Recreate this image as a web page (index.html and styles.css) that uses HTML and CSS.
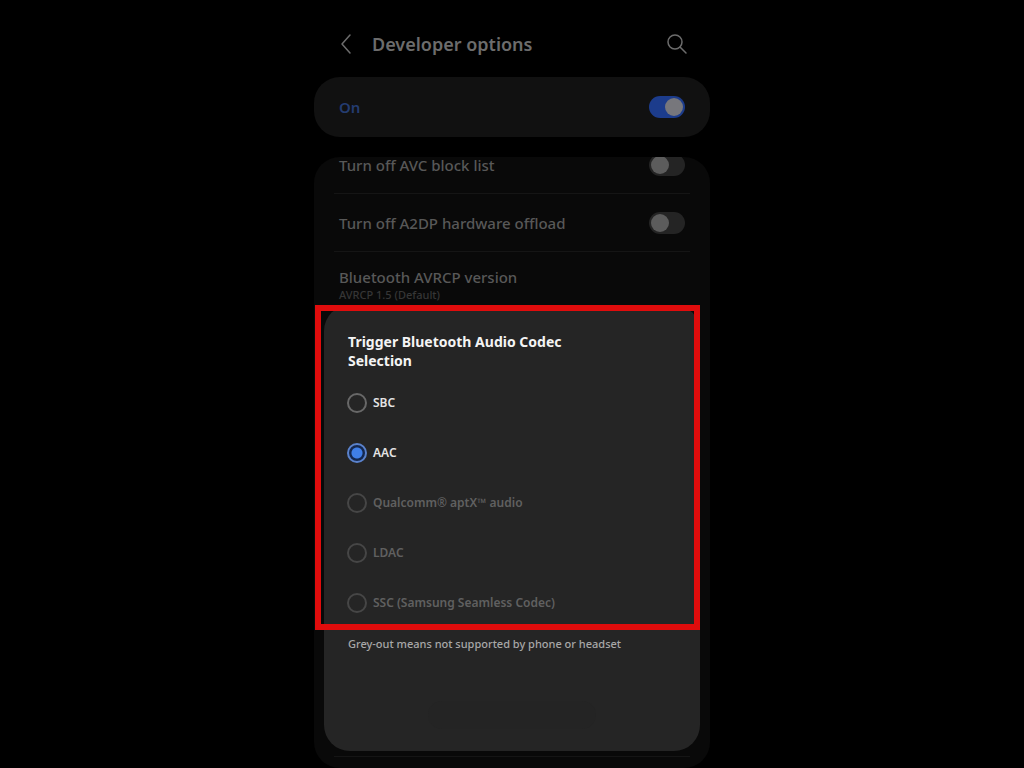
FILE: index.html
```html
<!DOCTYPE html>
<html lang="en">
<head>
    <meta charset="UTF-8">
    <meta name="viewport" content="width=device-width, initial-scale=1.0">
    <title>Developer options</title>
    <link rel="stylesheet" href="styles.css">
</head>
<body>
    <div class="phone">
        <header class="header">
            <button type="button" class="icon-button" aria-label="Back">
                <svg width="20" height="22" viewBox="0 0 20 22" fill="none" stroke="currentColor" stroke-width="1.5" stroke-linecap="round" stroke-linejoin="round">
                    <path d="M12 2L4 11L12 20" />
                </svg>
            </button>
            <h1>Developer options</h1>
            <button type="button" class="icon-button" aria-label="Search">
                <svg width="22" height="22" viewBox="0 0 22 22" fill="none" stroke="currentColor" stroke-width="1.5" stroke-linecap="round">
                    <circle cx="9" cy="9" r="7" />
                    <path d="M14 14L20 20" />
                </svg>
            </button>
        </header>

        <div class="master">
            <label for="master-switch">On</label>
            <input type="checkbox" class="switch" id="master-switch" checked>
        </div>

        <main class="options">
            <div class="row row-scrolled">
                <label for="avc">Turn off AVC block list</label>
                <input type="checkbox" class="switch" id="avc">
            </div>
            <div class="row">
                <label for="a2dp">Turn off A2DP hardware offload</label>
                <input type="checkbox" class="switch" id="a2dp">
            </div>
            <div class="row row-version">
                <div>Bluetooth AVRCP version</div>
                <div class="value">AVRCP 1.5 (Default)</div>
            </div>
        </main>

        <form class="dialog">
            <h2>Trigger Bluetooth Audio Codec Selection</h2>
            <div class="codecs">
                <label class="codec"><input type="radio" name="codec">SBC</label>
                <label class="codec"><input type="radio" name="codec" checked>AAC</label>
                <label class="codec"><input type="radio" name="codec" disabled>Qualcomm® aptX™ audio</label>
                <label class="codec"><input type="radio" name="codec" disabled>LDAC</label>
                <label class="codec"><input type="radio" name="codec" disabled>SSC (Samsung Seamless Codec)</label>
            </div>
            <p>Grey-out means not supported by phone or headset</p>
            <div class="smudge"></div>
            <div class="highlight"></div>
        </form>
    </div>
</body>
</html>
```
FILE: styles.css
```css
:root {
    --background-color: #000000;
    --master-color: #111111;
    --card-color: #090909;
    --dialog-color: #252525;
    --line-color: #151515;
    --dim-text: #585858;
    --blue: #3f7fe8;
    --highlight-color: #e00c0c;
    --border-radius: 26px;
}

* {
    box-sizing: border-box;
}

body {
    margin: 0;
    font-family: 'Noto Sans', 'Open Sans', sans-serif;
    font-size: 15px;
    font-weight: 500;
    line-height: 16px;
    color: var(--dim-text);
    background-color: var(--background-color);
}

.phone {
    position: relative;
    display: flex;
    flex-direction: column;
    max-width: 396px;
    height: 100vh;
    min-height: 700px;
    margin: 0 auto;
    overflow: hidden;
}

/* Top bar */
.header {
    display: flex;
    align-items: center;
    gap: 14px;
    padding: 32px 22px 21px 24px;
    color: #6c6c6c;
}

.header h1 {
    flex: 1;
    margin: 0;
    font-size: 18px;
    font-weight: 600;
    line-height: 24px;
}

.icon-button {
    display: flex;
    padding: 0;
    border: none;
    color: inherit;
    background: none;
    cursor: pointer;
}

.master {
    display: flex;
    align-items: center;
    justify-content: space-between;
    height: 60px;
    padding: 0 25px;
    border-radius: var(--border-radius);
    font-weight: 600;
    color: #243c70;
    background-color: var(--master-color);
}

.switch {
    appearance: none;
    display: flex;
    align-items: center;
    width: 36px;
    height: 22px;
    margin: 0;
    padding: 0 2px;
    border-radius: 11px;
    background-color: #242424;
}

.switch::before {
    content: "";
    width: 18px;
    height: 18px;
    border-radius: 50%;
    background-color: #5c5c5c;
}

.switch:checked {
    justify-content: flex-end;
    background-color: #1c3c8c;
}

.switch:checked::before {
    background-color: #77777c;
}

/* Option list, scrolled a little way under the top card */
.options {
    flex: 1;
    display: flex;
    flex-direction: column;
    margin-top: 20px;
    padding: 0 20px 11px;
    border-radius: var(--border-radius);
    background-color: var(--card-color);
    overflow: hidden;
}

.row {
    display: flex;
    align-items: center;
    justify-content: space-between;
    flex: none;
    height: 58px;
    padding: 0 5px;
    border-bottom: 1px solid var(--line-color);
}

.row-scrolled {
    margin-top: -21px;
}

.row-version {
    flex: 1;
    display: block;
    padding-top: 17px;
}

.value {
    margin-top: 2px;
    font-size: 11px;
    color: #363636;
}

/* Codec dialog */
.dialog {
    position: absolute;
    right: 10px;
    bottom: 17px;
    left: 10px;
    padding: 27px 24px 22px;
    border-radius: var(--border-radius);
    color: #e4e4e4;
    background-color: var(--dialog-color);
}

.dialog h2 {
    max-width: 240px;
    margin: 0 0 18px;
    font-size: 14px;
    font-weight: 700;
    line-height: 19px;
    color: #f4f4f4;
}

.codecs {
    display: flex;
    flex-direction: column;
    gap: 20px;
}

.codec {
    display: flex;
    align-items: center;
    gap: 6px;
    height: 30px;
    font-size: 12px;
    font-weight: 600;
}

.codec:has(:disabled) {
    color: #606060;
}

.codec input {
    appearance: none;
    flex: none;
    width: 20px;
    height: 20px;
    margin: 0 0 0 -1px;
    border: 2px solid #686868;
    border-radius: 50%;
}

.codec input:checked {
    border-color: #5a82cc;
    background: radial-gradient(circle, var(--blue) 5px, #14284f 6px);
}

.codec input:disabled {
    border-color: #464646;
}

.dialog p {
    margin: 18px 0 0;
    font-size: 11px;
    color: #a8a8a8;
}

.smudge {
    width: 168px;
    height: 28px;
    margin: 49px auto 0;
    border-radius: 14px;
    background-color: #242424;
}

/* Frame around the codec choices */
.highlight {
    position: absolute;
    top: 0;
    right: 0;
    left: -9px;
    height: 325px;
    border: 6px solid var(--highlight-color);
    pointer-events: none;
}
```
